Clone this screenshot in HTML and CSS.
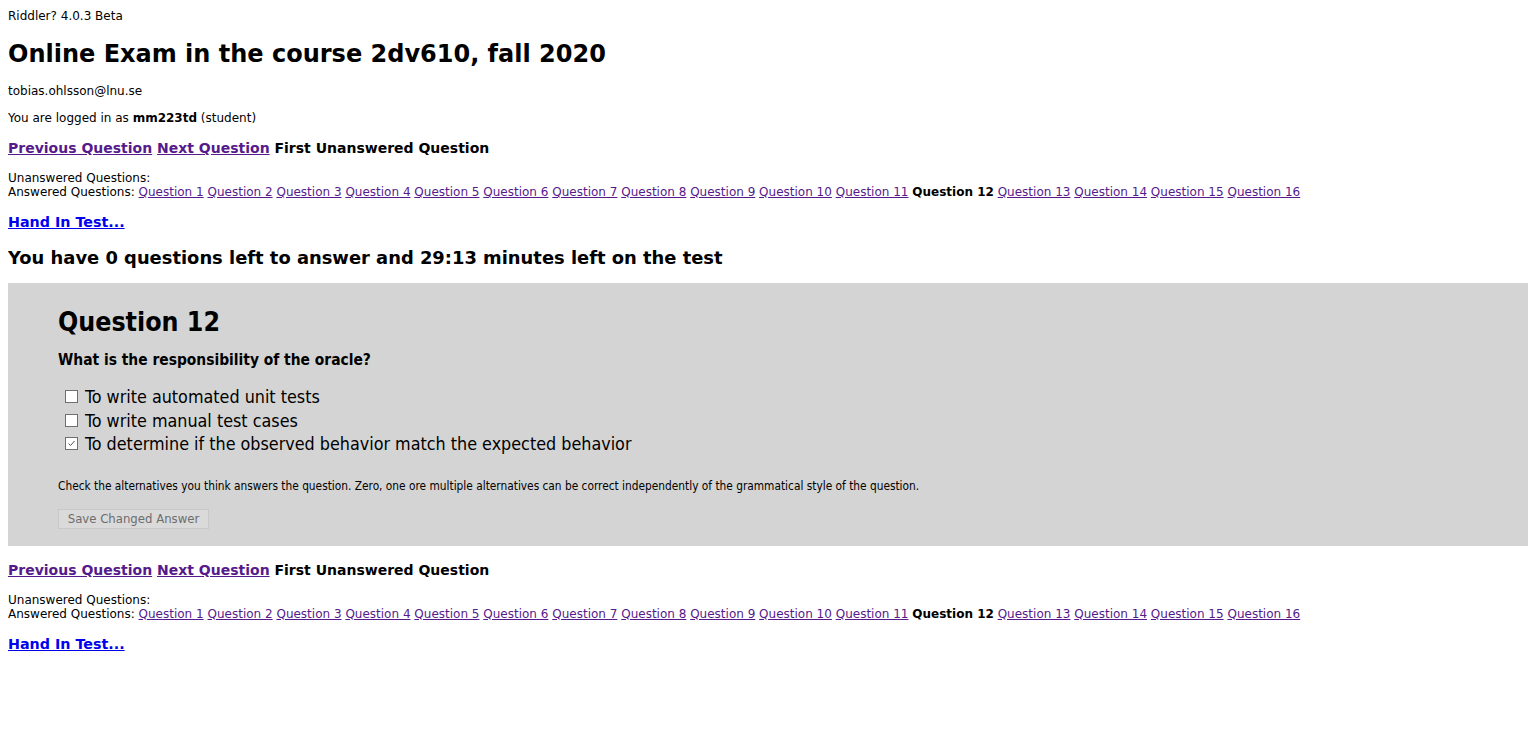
FILE: index.html
```html
<!DOCTYPE html>
<html>
<head>
<meta charset="utf-8">
<title>Riddler</title>
<link rel="stylesheet" href="styles.css">
</head>
<body>
<div class="version">Riddler? 4.0.3 Beta</div>
<h1 class="title">Online Exam in the course 2dv610, fall 2020</h1>
<div class="email">tobias.ohlsson@lnu.se</div>
<div class="login">You are logged in as <b>mm223td</b> (student)</div>

<div class="nav">
  <a class="visited" href="#">Previous Question</a> <a class="visited" href="#">Next Question</a> <span>First Unanswered Question</span>
</div>
<div class="qlist">
  <div>Unanswered Questions:</div>
  <div>Answered Questions: <a href="#">Question 1</a> <a href="#">Question 2</a> <a href="#">Question 3</a> <a href="#">Question 4</a> <a href="#">Question 5</a> <a href="#">Question 6</a> <a href="#">Question 7</a> <a href="#">Question 8</a> <a href="#">Question 9</a> <a href="#">Question 10</a> <a href="#">Question 11</a> <b>Question 12</b> <a href="#">Question 13</a> <a href="#">Question 14</a> <a href="#">Question 15</a> <a href="#">Question 16</a></div>
</div>
<div class="handin"><a href="#">Hand In Test...</a></div>

<h2 class="status">You have 0 questions left to answer and 29:13 minutes left on the test</h2>

<div class="question">
  <h2 class="qtitle">Question 12</h2>
  <div class="qtext">What is the responsibility of the oracle?</div>
  <div class="alts">
    <label class="alt"><span class="box"></span>To write automated unit tests</label>
    <label class="alt"><span class="box"></span>To write manual test cases</label>
    <label class="alt"><span class="box"><svg width="11" height="11" viewBox="0 0 11 11"><path d="M2.5 5.5 L4.5 7.5 L8.5 3" fill="none" stroke="#555" stroke-width="1"/></svg></span>To determine if the observed behavior match the expected behavior</label>
  </div>
  <div class="hint">Check the alternatives you think answers the question. Zero, one ore multiple alternatives can be correct independently of the grammatical style of the question.</div>
  <button class="save" disabled>Save Changed Answer</button>
</div>

<div class="nav nav-bottom">
  <a class="visited" href="#">Previous Question</a> <a class="visited" href="#">Next Question</a> <span>First Unanswered Question</span>
</div>
<div class="qlist">
  <div>Unanswered Questions:</div>
  <div>Answered Questions: <a href="#">Question 1</a> <a href="#">Question 2</a> <a href="#">Question 3</a> <a href="#">Question 4</a> <a href="#">Question 5</a> <a href="#">Question 6</a> <a href="#">Question 7</a> <a href="#">Question 8</a> <a href="#">Question 9</a> <a href="#">Question 10</a> <a href="#">Question 11</a> <b>Question 12</b> <a href="#">Question 13</a> <a href="#">Question 14</a> <a href="#">Question 15</a> <a href="#">Question 16</a></div>
</div>
<div class="handin"><a href="#">Hand In Test...</a></div>
</body>
</html>
```
FILE: styles.css
```css
html { background: #fff; }
body {
  margin: 8px;
  font-family: "DejaVu Sans", sans-serif;
  font-size: 12px;
  color: #000;
}
a { color: #0000ee; }
a.visited, .qlist a { color: #551a8b; }

.version { line-height: 15px; padding-top: 1px; }
.title {
  font-size: 24px;
  font-weight: bold;
  margin: 15px 0 0;
  line-height: 30px;
}
.email { margin-top: 15px; line-height: 15px; }
.login { margin-top: 12px; line-height: 15px; }

.nav {
  font-size: 14px;
  font-weight: bold;
  margin-top: 13px;
  line-height: 18px;
}
.qlist { margin-top: 14px; line-height: 14px; }
.handin {
  font-size: 14.3px;
  font-weight: bold;
  margin-top: 14px;
  line-height: 18px;
}
.status {
  font-size: 17.9px;
  font-weight: bold;
  margin: 15px 0 0;
  line-height: 23px;
}

.question {
  background: #d4d4d4;
  margin-top: 14px;
  padding: 24px 50px 17px;
  font-family: "DejaVu Sans Condensed", sans-serif;
}
.qtitle {
  font-size: 26.5px;
  font-weight: bold;
  margin: 0;
  line-height: 30px;
}
.qtext {
  font-size: 15.4px;
  font-weight: bold;
  margin-top: 14px;
  line-height: 18px;
}
.alts {
  margin-top: 16px;
  display: flex;
  flex-direction: column;
}
.alt {
  font-size: 17.8px;
  line-height: 23.5px;
  display: flex;
  align-items: center;
}
.box {
  width: 11px;
  height: 11px;
  border: 1px solid #707070;
  background: #fff;
  margin: 0 7px 0 7px;
  display: inline-flex;
}
.box svg { display: block; }
.hint {
  font-size: 11.8px;
  margin-top: 24px;
  line-height: 13px;
}
.save {
  margin-top: 16px;
  font-family: "DejaVu Sans Condensed", sans-serif;
  font-size: 13px;
  color: #6d6d6d;
  background: #dadada;
  border: 1px solid #c8c8c8;
  padding: 0 8px;
  height: 20px;
  width: 151px;
}
.nav-bottom { margin-top: 15px; }
```
